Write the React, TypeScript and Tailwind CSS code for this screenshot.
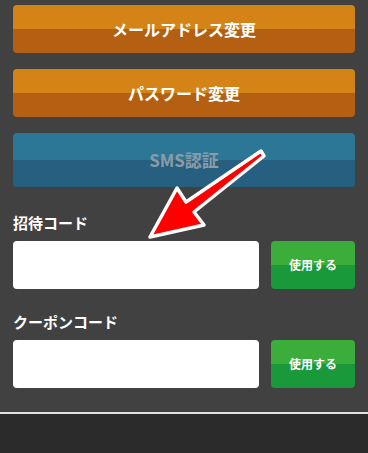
const font = { fontFamily: '"Noto Sans CJK JP", "Noto Sans", sans-serif' }

function SplitButton({ label, top, bottom, text, className }: { label: string; top: string; bottom: string; text: string; className: string }) {
  return (
    <div className={`relative flex flex-col overflow-hidden rounded-[4px] ${className}`}>
      <div className={`flex-1 ${top}`} />
      <div className={`flex-1 ${bottom}`} />
      <span className={`absolute inset-0 flex items-center justify-center font-bold ${text}`}>{label}</span>
    </div>
  )
}

function CodeRow({ label }: { label: string }) {
  return (
    <div>
      <p className="text-[15px] font-bold leading-5 text-white">{label}</p>
      <div className="mt-2 flex gap-3">
        <input className="h-12 flex-1 rounded-[4px] bg-white px-3 outline-none" />
        <SplitButton label="使用する" top="bg-[#3aad3a]" bottom="bg-[#1a993a]" text="text-[12px] text-white" className="h-12 w-[84px]" />
      </div>
    </div>
  )
}

export default function App() {
  return (
    <div className="relative h-[453px] w-[368px] overflow-hidden bg-[#414141]" style={font}>
      <div className="flex flex-col px-[13px] pt-[5px]">
        <SplitButton label="メールアドレス変更" top="bg-[#d48416]" bottom="bg-[#b55f13]" text="text-[16px] text-white" className="h-12" />
        <SplitButton label="パスワード変更" top="bg-[#d48416]" bottom="bg-[#b55f13]" text="text-[16px] text-white" className="mt-4 h-12" />
        <SplitButton label="SMS認証" top="bg-[#2c7796]" bottom="bg-[#275f80]" text="text-[17px] text-[#8c9ca6]" className="mt-4 h-[54px]" />
        <div className="mt-[26px]">
          <CodeRow label="招待コード" />
        </div>
        <div className="mt-[23px]">
          <CodeRow label="クーポンコード" />
        </div>
      </div>
      <div className="mt-6 h-[2px] bg-[#e2e2e2]" />
      <div className="h-[60px] bg-[#2b2b2b]" />

      <svg className="pointer-events-none absolute left-0 top-0" width="368" height="453">
        <polygon
          points="150,237 177,188 186,202 261,151 264,156 194,212 204,225"
          fill="#ff0000"
          stroke="#ffffff"
          strokeWidth="3.5"
          strokeLinejoin="round"
        />
      </svg>
    </div>
  )
}
